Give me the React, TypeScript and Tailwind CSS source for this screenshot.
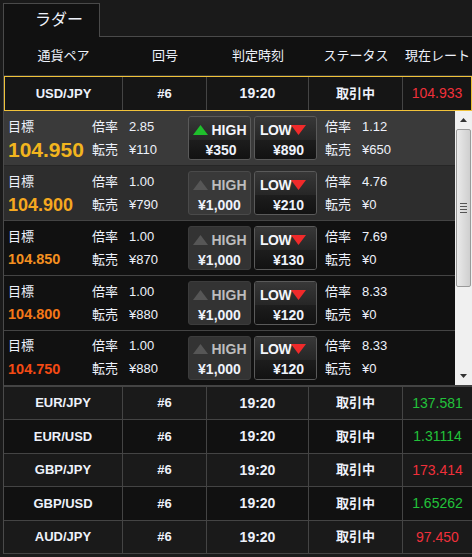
import React from "react";

const F = "font-['Liberation_Sans','Noto_Sans_CJK_JP',sans-serif]";

type LRow = {
  price: string;
  pc: string;
  ps: string;
  r1: string;
  s1: string;
  hi: string;
  hiOn: boolean;
  lo: string;
  r2: string;
  s2: string;
  bg: string;
  bd: string;
  h: string;
  dis: string;
};

const ladder: LRow[] = [
  { price: "104.950", pc: "text-[#f2b51e]", ps: "text-[21px]", r1: "2.85", s1: "¥110", hi: "¥350", hiOn: true, lo: "¥890", r2: "1.12", s2: "¥650", bg: "bg-[#3a3a3a]", bd: "border-[#262626]", h: "h-[55px]", dis: "" },
  { price: "104.900", pc: "text-[#f5a820]", ps: "text-[18px]", r1: "1.00", s1: "¥790", hi: "¥1,000", hiOn: false, lo: "¥210", r2: "4.76", s2: "¥0", bg: "bg-[#2d2d2d]", bd: "border-[#444]", h: "h-[55px]", dis: "bg-[#393939] border-[#4a4a4a]" },
  { price: "104.850", pc: "text-[#f59020]", ps: "text-[14.5px]", r1: "1.00", s1: "¥870", hi: "¥1,000", hiOn: false, lo: "¥130", r2: "7.69", s2: "¥0", bg: "bg-[#111]", bd: "border-[#444]", h: "h-[55px]", dis: "bg-[#333] border-[#3c3c3c]" },
  { price: "104.800", pc: "text-[#f57818]", ps: "text-[14.5px]", r1: "1.00", s1: "¥880", hi: "¥1,000", hiOn: false, lo: "¥120", r2: "8.33", s2: "¥0", bg: "bg-[#111]", bd: "border-[#444]", h: "h-[55px]", dis: "bg-[#333] border-[#3c3c3c]" },
  { price: "104.750", pc: "text-[#f54a14]", ps: "text-[14.5px]", r1: "1.00", s1: "¥880", hi: "¥1,000", hiOn: false, lo: "¥120", r2: "8.33", s2: "¥0", bg: "bg-[#111]", bd: "border-transparent", h: "h-[54px]", dis: "bg-[#333] border-[#3c3c3c]" },
];

const pairs = [
  { p: "EUR/JPY", rate: "137.581", up: true, bg: "bg-[#1a1a1a]", h: "h-[33px]" },
  { p: "EUR/USD", rate: "1.31114", up: true, bg: "bg-[#111]", h: "h-[34px]" },
  { p: "GBP/JPY", rate: "173.414", up: false, bg: "bg-[#1a1a1a]", h: "h-[33px]" },
  { p: "GBP/USD", rate: "1.65262", up: true, bg: "bg-[#111]", h: "h-[34px]" },
  { p: "AUD/JPY", rate: "97.450", up: false, bg: "bg-[#1a1a1a]", h: "h-[33px]" },
];

function UpTri({ color }: { color: string }) {
  return (
    <svg width="15" height="10" viewBox="0 0 15 10">
      <polygon points="7.5,0 15,10 0,10" fill={color} />
    </svg>
  );
}

function DownTri({ color }: { color: string }) {
  return (
    <svg width="15" height="10" viewBox="0 0 15 10">
      <polygon points="0,0 15,0 7.5,10" fill={color} />
    </svg>
  );
}

function HighBtn({ on, price, dis }: { on: boolean; price: string; dis: string }) {
  if (on) {
    return (
      <div className="w-[63px] h-[44px] rounded-[3px] border border-[#5a5a5a] flex flex-col overflow-hidden">
        <div className="h-[23px] flex items-center justify-center gap-[4px] pt-[2px] bg-linear-to-b from-[#383838] to-[#262626]">
          <UpTri color="#1fbf2c" />
          <span className="text-[14px] font-bold text-[#f4f6fb] leading-none">HIGH</span>
        </div>
        <div className="flex-1 flex items-center justify-center pl-[3px] text-[14px] font-bold leading-none bg-linear-to-b from-[#1d1d1d] to-[#121212]">
          {price}
        </div>
      </div>
    );
  }
  return (
    <div className={`w-[63px] h-[44px] rounded-[3px] border flex flex-col overflow-hidden ${dis}`}>
      <div className="h-[23px] flex items-center justify-center gap-[4px] pt-[2px]">
        <UpTri color="#565656" />
        <span className="text-[14px] font-bold text-[#bdbdbd] leading-none">HIGH</span>
      </div>
      <div className="flex-1 flex items-center justify-center text-[14px] font-bold leading-none">{price}</div>
    </div>
  );
}

function LowBtn({ price }: { price: string }) {
  return (
    <div className="w-[63px] h-[44px] rounded-[3px] border border-[#5a5a5a] flex flex-col overflow-hidden">
      <div className="h-[23px] flex items-center justify-start pl-[5px] pt-[2px] bg-linear-to-b from-[#383838] to-[#262626]">
        <span className="text-[14px] font-bold text-[#f4f6fb] leading-none tracking-[-0.5px]">LOW</span>
        <DownTri color="#f02a2a" />
      </div>
      <div className="flex-1 flex items-center justify-center pl-[6px] text-[14px] font-bold leading-none bg-linear-to-b from-[#1d1d1d] to-[#121212]">
        {price}
      </div>
    </div>
  );
}

function Info({ a, b }: { a: string; b: string }) {
  return (
    <div className="flex flex-col text-[13px]">
      <div className="h-[23px] flex items-center gap-[11px]">
        <span>倍率</span>
        <span>{a}</span>
      </div>
      <div className="h-[23px] flex items-center gap-[11px]">
        <span>転売</span>
        <span>{b}</span>
      </div>
    </div>
  );
}

function LadderRow({ r }: { r: LRow }) {
  return (
    <div className={`${r.h} ${r.bg} border-b ${r.bd} flex items-center`}>
      <div className="w-[88px] pl-[4px] flex flex-col">
        <div className="h-[23px] flex items-center text-[13px]">目標</div>
        <div className={`h-[23px] flex items-center font-bold leading-none ${r.ps} ${r.pc}`}>{r.price}</div>
      </div>
      <div className="w-[96px]">
        <Info a={r.r1} b={r.s1} />
      </div>
      <div className="flex gap-[3px]">
        <HighBtn on={r.hiOn} price={r.hi} dis={r.dis} />
        <LowBtn price={r.lo} />
      </div>
      <div className="ml-[8px]">
        <Info a={r.r2} b={r.s2} />
      </div>
    </div>
  );
}

function Scrollbar() {
  return (
    <div className="w-[17px] bg-[#f0f0f0] flex flex-col items-center">
      <div className="h-[18px] w-full flex items-center justify-center">
        <svg width="7" height="4" viewBox="0 0 7 4">
          <polygon points="3.5,0 7,4 0,4" fill="#333" />
        </svg>
      </div>
      <div className="w-[15px] h-[158px] rounded-[2px] border border-[#9a9a9a] bg-linear-to-r from-[#eaeaea] via-[#dcdcdc] to-[#cfcfcf] flex flex-col items-center justify-center gap-[2px]">
        <div className="w-[7px] h-[1px] bg-[#555]" />
        <div className="w-[7px] h-[1px] bg-[#555]" />
        <div className="w-[7px] h-[1px] bg-[#555]" />
        <div className="w-[7px] h-[1px] bg-[#555]" />
      </div>
      <div className="flex-1" />
      <div className="h-[18px] w-full flex items-center justify-center">
        <svg width="7" height="4" viewBox="0 0 7 4">
          <polygon points="0,0 7,0 3.5,4" fill="#333" />
        </svg>
      </div>
    </div>
  );
}

function PairCells({ p, rate, up }: { p: string; rate: string; up: boolean }) {
  return (
    <>
      <div className="border-r border-[#444] flex items-center justify-center text-[13px] font-bold">{p}</div>
      <div className="border-r border-[#444] flex items-center justify-center text-[13px] font-bold">#6</div>
      <div className="border-r border-[#444] flex items-center justify-center text-[14px] font-bold">19:20</div>
      <div className="border-r border-[#444] flex items-center justify-center text-[13px] font-bold">取引中</div>
      <div className={`flex items-center justify-center text-[14px] ${up ? "text-[#22c23a]" : "text-[#f0303a]"}`}>{rate}</div>
    </>
  );
}

export default function App() {
  return (
    <div className={`w-[472px] h-[557px] bg-[#1a1a1a] text-[#eef2fb] overflow-hidden ${F}`}>
      <div className="flex h-[37px]">
        <div className="ml-[3px] mt-[3px] w-[97px] h-[34px] border border-b-0 border-[#4a4a4a] bg-[#111] flex items-center pl-[31px] text-[16px] pb-[2px]">
          ラダー
        </div>
        <div className="flex-1 border-b border-[#4a4a4a]" />
      </div>
      <div className="ml-[3px] border-l border-[#4a4a4a]">
        <div className="h-[39px] bg-[#111] border-b border-[#333] grid grid-cols-[119px_84px_102px_94px_1fr] text-[13px]">
          <div className="flex items-center justify-center">通貨ペア</div>
          <div className="flex items-center justify-center">回号</div>
          <div className="flex items-center justify-center">判定時刻</div>
          <div className="flex items-center justify-center">ステータス</div>
          <div className="flex items-center justify-center">現在レート</div>
        </div>
        <div className="h-[35px] bg-[#151515] border border-[#f0c23a] grid grid-cols-[118px_84px_102px_94px_1fr]">
          <PairCells p="USD/JPY" rate="104.933" up={false} />
        </div>
        <div className="h-[274px] flex">
          <div className="flex-1 flex flex-col">
            {ladder.map((r, i) => (
              <LadderRow key={i} r={r} />
            ))}
          </div>
          <Scrollbar />
        </div>
        <div className="h-[2px] bg-[#444]" />
        {pairs.map((x, i) => (
          <div key={i} className={`${x.h} ${x.bg} border-b border-[#444] grid grid-cols-[119px_84px_102px_94px_1fr]`}>
            <PairCells p={x.p} rate={x.rate} up={x.up} />
          </div>
        ))}
      </div>
    </div>
  );
}
